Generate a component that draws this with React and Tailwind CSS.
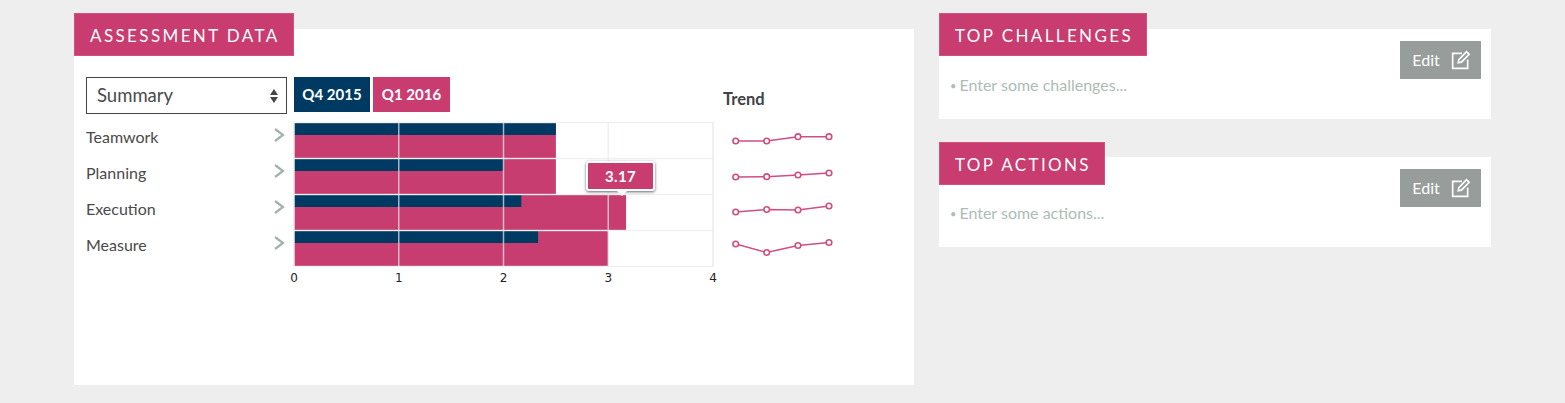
import React from 'react';

const rows = [
  { label: 'Teamwork', q4: 2.5, q1: 2.5, trend: [141, 141, 136.7, 136.7] },
  { label: 'Planning', q4: 2, q1: 2.5, trend: [177, 176.7, 175, 173] },
  { label: 'Execution', q4: 2.17, q1: 3.17, trend: [212, 209.5, 210, 206] },
  { label: 'Measure', q4: 2.33, q1: 3, trend: [244, 252.5, 245.5, 242.5] },
];

const UNIT = 104.75;
const trendX = [12.7, 43.7, 75, 106];

const PanelTitle = ({ children, className = '-mt-4' }) => (
  <h2 className={`relative w-fit h-[43px] pl-[15px] pr-[13px] pt-[2px] flex items-center bg-[#c83c6f] border border-[#d0537f] text-white text-[17px] font-normal tracking-[0.14em] uppercase ${className}`}>
    {children}
  </h2>
);

const EditButton = () => (
  <button className="w-[81px] h-[38px] pl-[2px] flex items-center justify-center gap-[11px] bg-[#969d9b] text-white text-[16px]">
    Edit
    <svg width="20" height="20" viewBox="0 0 18 18" fill="none" stroke="currentColor" strokeWidth="1.5">
      <path d="M10 3H1.5v13.5H15V8.5" />
      <path d="M6.5 11.5l.6-2.8L14 1.6l2.3 2.2-6.9 7.1z" />
    </svg>
  </button>
);

const NotesPanel = ({ title, placeholder, titleClass }) => (
  <section className="h-[90px] bg-white">
    <PanelTitle className={titleClass}>{title}</PanelTitle>
    <div className="relative">
      <div className="absolute right-[10px] -top-[15px]">
        <EditButton />
      </div>
      <p className="pl-[11px] pt-[19px] text-[16px] leading-5 text-[#aebcb6]">
        <span className="text-[11px] mr-[3px] align-[1px]">•</span>
        {placeholder}
      </p>
    </div>
  </section>
);

const Chart = () => (
  <svg width="430" height="172" viewBox="0 0 430 172" className="block overflow-visible">
    {rows.map((row, i) => {
      const top = i * 36;
      return (
        <g key={row.label}>
          <rect x="1" y={top + 1} width={row.q1 * UNIT} height="35" fill="#c73d70" />
          <rect x="1" y={top + 1} width={row.q4 * UNIT} height="12" fill="#003a63" />
        </g>
      );
    })}
    {[0, 1, 2, 3, 4].map((n) => (
      <line key={n} x1={1 + n * UNIT} x2={1 + n * UNIT} y1="0" y2="144" stroke="#e9edeb" strokeOpacity={n === 0 || n === 4 ? 1 : 0.7} strokeWidth="1.5" />
    ))}
    {[0, 1, 2, 3, 4].map((n) => (
      <line key={n} x1="0" x2={UNIT * 4 + 2} y1={n * 36 + 0.5} y2={n * 36 + 0.5} stroke="#e9edeb" strokeOpacity="0.8" strokeWidth="1.5" />
    ))}
    {[0, 1, 2, 3, 4].map((n) => (
      <text key={n} x={1 + n * UNIT} y="160" textAnchor="middle" fontSize="12" fill="#222" fontFamily="'DejaVu Sans', sans-serif">
        {n}
      </text>
    ))}
  </svg>
);

const Sparklines = () => (
  <svg width="120" height="150" viewBox="0 109 120 150" className="block">
    {rows.map((row) => (
      <g key={row.label} fill="#fff" stroke="#d04f82" strokeWidth="1.6">
        <polyline fill="none" points={row.trend.map((y, i) => `${trendX[i]},${y}`).join(' ')} />
        {row.trend.map((y, i) => (
          <circle key={i} cx={trendX[i]} cy={y} r="2.8" />
        ))}
      </g>
    ))}
  </svg>
);

export default function App() {
  return (
    <div className="h-[403px] bg-[#eeeeee] pt-[29px] pl-[74px] flex items-start font-['Lato',sans-serif]">
      <section className="w-[840px] h-[356px] bg-white">
        <PanelTitle>Assessment Data</PanelTitle>
        <div className="flex pl-3 pt-[21px]">
          <div className="w-[637px]">
            <div className="flex items-start">
              <div className="w-[201px] h-[37px] pl-[10px] pr-2 flex items-center justify-between border border-[#444] text-[18.5px] text-[#4a4a4a]">
                Summary
                <span className="flex flex-col gap-[2px]">
                  <span className="w-0 h-0 border-x-[4.5px] border-x-transparent border-b-[6px] border-b-[#444]" />
                  <span className="w-0 h-0 border-x-[4.5px] border-x-transparent border-t-[6px] border-t-[#444]" />
                </span>
              </div>
              <div className="ml-[7px] w-[76px] h-[35px] flex items-center justify-center bg-[#003a63] text-white text-[15px] font-bold">Q4 2015</div>
              <div className="ml-[3px] w-[77px] h-[35px] flex items-center justify-center bg-[#c83c6f] text-white text-[15px] font-bold">Q1 2016</div>
            </div>
            <div className="flex mt-[8px]">
              <ul className="w-[208px] -mt-[3px] text-[16px] text-[#4a4a4a]">
                {rows.map((row) => (
                  <li key={row.label} className="h-9 flex items-center justify-between pr-[8px]">
                    {row.label}
                    <svg width="12" height="16" viewBox="0 0 12 16" fill="none" stroke="#a3b0ab" strokeWidth="2.2" className="-mt-[5px]">
                      <path d="M2 2l8 6-8 6" />
                    </svg>
                  </li>
                ))}
              </ul>
              <div className="relative">
                <Chart />
                <div className="absolute left-[293px] top-[39px] w-[69px] h-[30px] flex items-center justify-center bg-[#c83c6f] border-2 border-white rounded-[3px] shadow-[0_1px_3px_rgba(0,0,0,0.6)] text-white text-[15px] font-bold tracking-wide">
                  3.17
                  <span className="absolute -bottom-[7px] left-[28px] w-0 h-0 border-x-[6px] border-x-transparent border-t-[6px] border-t-white" />
                </div>
              </div>
            </div>
          </div>
          <div className="pt-[12px]">
            <div className="h-[20px] text-[16.5px] leading-5 font-bold text-[#3f4446]">Trend</div>
            <Sparklines />
          </div>
        </div>
      </section>
      <div className="ml-[25px] w-[552px] flex flex-col gap-[38px]">
        <NotesPanel title="Top Challenges" placeholder="Enter some challenges..." titleClass="-mt-4" />
        <NotesPanel title="Top Actions" placeholder="Enter some actions..." titleClass="-mt-[15px] -mb-px" />
      </div>
    </div>
  );
}
